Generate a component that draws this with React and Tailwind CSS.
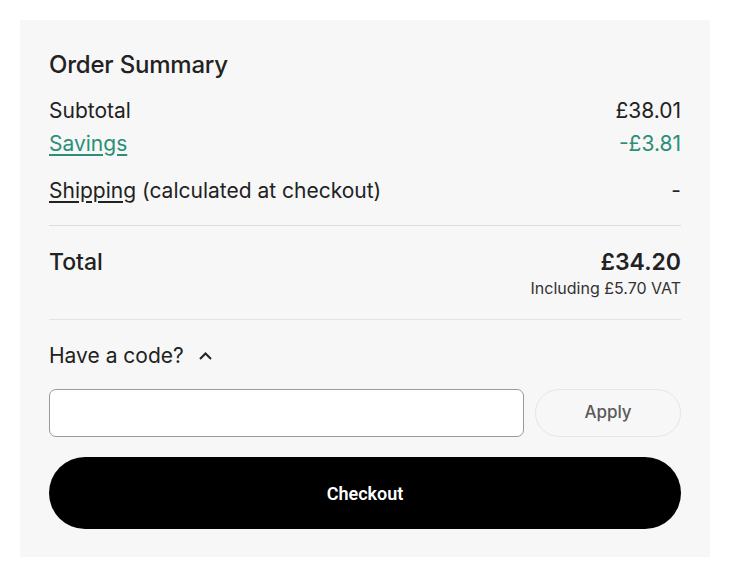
import React, { useState } from "react";

const font = { fontFamily: "Inter, 'Noto Sans', sans-serif" };

function Row({ label, value, className = "" }) {
  return (
    <div className={`flex h-[33px] items-center justify-between ${className}`}>
      {label}
      <span>{value}</span>
    </div>
  );
}

export default function App() {
  const [code, setCode] = useState("");

  return (
    <div className="min-h-[576px] bg-white p-[20px]" style={font}>
      <div className="w-[690px] bg-[#f7f7f7] px-[29px] pt-[30px] pb-[28px] text-[#222222]">
        <h2 className="h-[30px] text-[24px] leading-[30px] font-medium tracking-[-0.2px]">
          Order Summary
        </h2>

        {/* line items */}
        <div className="mt-[14px] text-[21px]">
          <Row label={<span>Subtotal</span>} value="£38.01" />
          <Row
            className="text-[#2a8f76]"
            label={<span className="underline underline-offset-[3px]">Savings</span>}
            value="-£3.81"
          />
          <Row
            className="mt-[14px]"
            label={
              <span>
                <span className="underline underline-offset-[3px]">Shipping</span> (calculated at checkout)
              </span>
            }
            value="-"
          />
        </div>

        <div className="mt-[18px] border-t border-[#dddddd]" />

        {/* total */}
        <div className="flex justify-between pt-[21px] pb-[20px]">
          <span className="text-[23px] leading-[30px] font-medium">Total</span>
          <div className="flex flex-col items-end">
            <span className="text-[23px] leading-[30px] font-semibold">£34.20</span>
            <span className="text-[16px] leading-[22px] text-[#333333]">Including £5.70 VAT</span>
          </div>
        </div>

        <div className="border-t border-[#e3e3e3]" />

        {/* promo code */}
        <button className="mt-[21px] flex h-[30px] items-center gap-[14px] text-[21px]">
          Have a code?
          <svg width="15" height="10" viewBox="0 0 15 10" fill="none">
            <path d="M2 8L7.5 2.5L13 8" stroke="#222" strokeWidth="2" />
          </svg>
        </button>

        <div className="mt-[18px] flex gap-[11px]">
          <input
            value={code}
            onChange={(e) => setCode(e.target.value)}
            className="h-[48px] w-[475px] rounded-[7px] border border-[#9a9a9a] bg-white px-3 text-[16px] outline-none"
          />
          <button className="h-[48px] flex-1 rounded-full border border-[#e6e6e6] text-[17px] font-medium text-[#595959]">
            Apply
          </button>
        </div>

        <button
          className="mt-[20px] h-[72px] w-full rounded-full bg-black text-[18px] font-semibold text-white"
          style={{ fontFamily: "Roboto, 'Liberation Sans', sans-serif" }}
        >
          Checkout
        </button>
      </div>
    </div>
  );
}
